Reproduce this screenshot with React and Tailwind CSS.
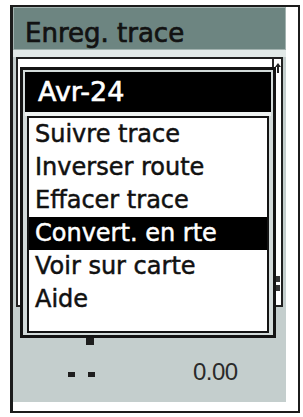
export default function App() {
  const items = [
    "Suivre trace",
    "Inverser route",
    "Effacer trace",
    "Convert. en rte",
    "Voir sur carte",
    "Aide",
  ];
  return (
    <div className="w-[303px] h-[417px] bg-white overflow-hidden pt-[5px] pl-[10px] font-['DejaVu_Sans',sans-serif]">
      <div className="relative w-[290px] h-[408px] border-2 border-l-[3px] border-[#1c1c1c] bg-white">
        <div className="w-[273px] h-[395px] flex flex-col bg-[#c4cecd]">
          <div className="h-[43px] bg-[#6d8581] border border-[#a3b3b0] pl-[11px] pt-[10px] text-[26px] leading-[30px] text-[#121212] [-webkit-text-stroke:0.7px]">
            Enreg. trace
          </div>
          <div className="h-[7px] bg-[#e2e9e8]" />
          <div className="flex-1 flex flex-col">
            <div className="ml-[3px] w-[267px] h-[250px] border-2 border-[#202020] bg-white flex justify-end">
              <div className="w-[9px] h-full border-l-2 border-[#2a2a2a] flex flex-col items-center">
                <svg width="8" height="12" viewBox="0 0 8 12" className="mt-[3px]">
                  <path d="M4 1 L7 5 L5 5 L5 11 L3 11 L3 5 L1 5 Z" fill="#222" />
                </svg>
                <div className="mt-[202px] w-[5px] h-[6px] bg-[#333]" />
                <div className="mt-[3px] w-[5px] h-[6px] bg-[#333]" />
              </div>
            </div>
            <div className="mt-[53px] h-[24px] flex items-start">
              <div className="ml-[55px] mt-[12px] w-[7px] h-[5px] bg-[#1e1e1e]" />
              <div className="ml-[13px] mt-[12px] w-[7px] h-[5px] bg-[#1e1e1e]" />
              <div className="ml-[98px] text-[24px] leading-[24px] font-['Liberation_Sans',sans-serif] tracking-[-0.5px] text-[#2a2a2a]">
                0.00
              </div>
            </div>
          </div>
        </div>

        <div className="absolute left-[73px] top-[331px] w-[8px] h-[7px] bg-[#1e1e1e]" />

        <div className="absolute left-[7px] top-[60px] w-[256px] border-[3px] border-[#141414] bg-[#d3dbda] p-[2px]">
          <div className="h-[40px] bg-black text-white text-[27px] leading-[40px] pl-[13px] [-webkit-text-stroke:0.6px]">
            Avr-24
          </div>
          <div className="h-[4px] bg-[#eef2f1]" />
          <div className="mx-[2px] h-[217px] border-2 border-[#141414] bg-white">
            {items.map((t, i) => (
              <div
                key={t}
                className={
                  i === 3
                    ? "h-[33px] leading-[33px] text-[24px] pl-[6px] bg-black text-white whitespace-nowrap [-webkit-text-stroke:0.5px]"
                    : "h-[33px] leading-[33px] text-[24px] pl-[6px] text-[#111] whitespace-nowrap [-webkit-text-stroke:0.5px]"
                }
              >
                {t}
              </div>
            ))}
          </div>
        </div>
      </div>
    </div>
  );
}
